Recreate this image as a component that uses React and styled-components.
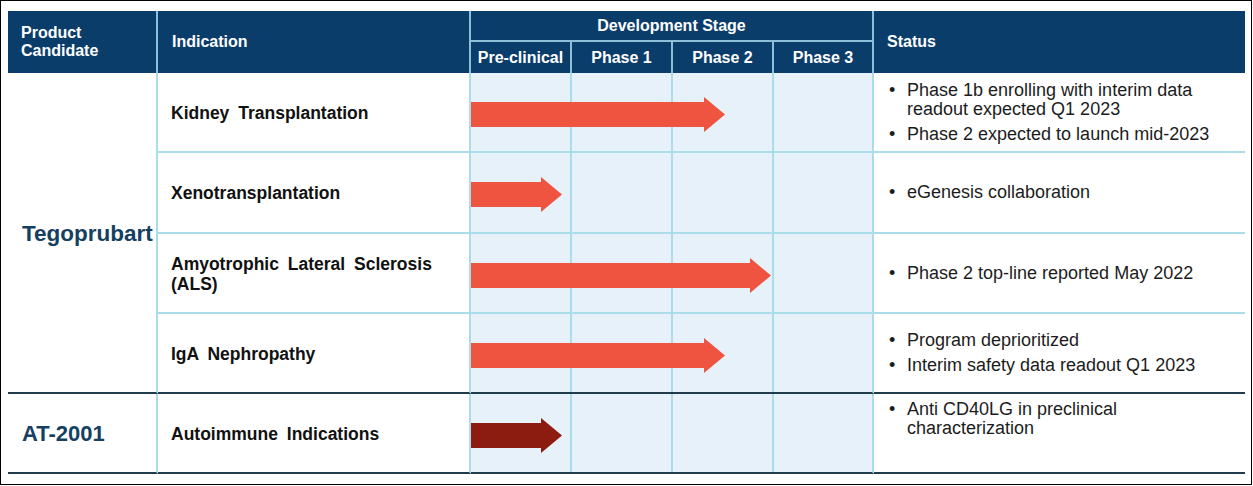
import styled, { createGlobalStyle } from "styled-components";

const GlobalStyle = createGlobalStyle`
  html, body {
    margin: 0;
    padding: 0;
    background: #ffffff;
  }
  body {
    font-family: "Liberation Sans", Arial, sans-serif;
  }
`;

const NAVY = "#0b3d6b";
const LIGHT = "#abdcea";
const HEADLINE = "#8dbfd8";
const DARK = "#1f3b4c";
const STAGE_BG = "#e7f1fa";

const Frame = styled.div`
  width: 1252px;
  height: 485px;
  box-sizing: border-box;
  border: 1px solid #000;
  padding: 10px 0 0 7px;
  background: #fff;
`;

const Table = styled.div`
  display: grid;
  grid-template-columns: 150px 313px 101px 101px 101px 100px 371px;
  grid-template-rows: 31px 31px 80px 81px 80px 80px 80px;
`;

const HeadCell = styled.div`
  box-sizing: border-box;
  background: ${NAVY};
  color: #fff;
  font-weight: bold;
  font-size: 16px;
  line-height: 18px;
  display: flex;
  align-items: center;
  justify-content: ${(p) => (p.$center ? "center" : "flex-start")};
  padding-left: ${(p) => (p.$center ? "0" : p.$pad || "13px")};
  grid-row: ${(p) => (p.$tall ? "span 2" : "auto")};
  grid-column: ${(p) => (p.$wide ? "span 4" : "auto")};
  border-right: ${(p) => (p.$last ? "none" : `2px solid ${HEADLINE}`)};
  border-bottom: ${(p) => (p.$wide ? `2px solid ${HEADLINE}` : "none")};
`;

const ProductCell = styled.div`
  box-sizing: border-box;
  grid-row: span ${(p) => p.$span || 1};
  display: flex;
  align-items: center;
  padding-left: 14px;
  padding-top: 2px;
  font-size: ${(p) => p.$size || "22px"};
  font-weight: bold;
  color: #16405f;
  border-right: 2px solid ${LIGHT};
  border-bottom: 2px solid ${DARK};
`;

const IndicationCell = styled.div`
  box-sizing: border-box;
  display: flex;
  align-items: center;
  padding-left: 13px;
  padding-top: 1px;
  font-size: 17.5px;
  line-height: 20px;
  font-weight: bold;
  color: #111;
  word-spacing: 4px;
  border-right: 2px solid ${LIGHT};
  border-bottom: 2px solid ${(p) => (p.$dark ? DARK : LIGHT)};
`;

const StageCell = styled.div`
  box-sizing: border-box;
  grid-column: span 4;
  display: flex;
  align-items: center;
  padding-top: 4px;
  background-color: ${STAGE_BG};
  background-image: linear-gradient(
    to right,
    transparent 99px,
    ${LIGHT} 99px,
    ${LIGHT} 101px
  );
  background-size: 101px 100%;
  background-repeat: repeat-x;
  border-right: 2px solid ${LIGHT};
  border-bottom: 2px solid ${(p) => (p.$dark ? DARK : LIGHT)};
`;

const StatusCell = styled.div`
  box-sizing: border-box;
  display: flex;
  flex-direction: column;
  justify-content: ${(p) => (p.$top ? "flex-start" : "center")};
  padding: ${(p) => (p.$top ? "6px 0 0 13px" : "0 0 0 13px")};
  border-bottom: 2px solid ${(p) => (p.$dark ? DARK : LIGHT)};
`;

const BulletList = styled.ul`
  list-style: none;
  margin: 0;
  padding: 0;
  display: flex;
  flex-direction: column;
  gap: 6px;
`;

const Item = styled.li`
  display: flex;
  font-size: 18px;
  line-height: 19px;
  color: #1c1c1c;
`;

const Dot = styled.span`
  flex: 0 0 20px;
  padding-left: 2px;
  box-sizing: border-box;
`;

const Arrow = ({ length, color }) => (
  <svg width={length} height={35} viewBox={`0 0 ${length} 35`}>
    <polygon
      points={`0,5 ${length - 21},5 ${length - 21},0 ${length},17.5 ${length - 21},35 ${length - 21},30 0,30`}
      fill={color}
    />
  </svg>
);

const rows = [
  {
    name: "Kidney Transplantation",
    arrow: 254,
    status: [
      "Phase 1b enrolling with interim data readout expected Q1 2023",
      "Phase 2 expected to launch mid-2023",
    ],
  },
  {
    name: "Xenotransplantation",
    arrow: 91,
    status: ["eGenesis collaboration"],
  },
  {
    name: (
      <>
        Amyotrophic Lateral Sclerosis
        <br />
        (ALS)
      </>
    ),
    arrow: 300,
    status: ["Phase 2 top-line reported May 2022"],
  },
  {
    name: "IgA Nephropathy",
    arrow: 254,
    status: ["Program deprioritized", "Interim safety data readout Q1 2023"],
    dark: true,
  },
];

const Status = ({ items, dark, top }) => (
  <StatusCell $dark={dark} $top={top}>
    <BulletList>
      {items.map((s, i) => (
        <Item key={i}>
          <Dot>•</Dot>
          <span>{s}</span>
        </Item>
      ))}
    </BulletList>
  </StatusCell>
);

export default function App() {
  return (
    <Frame>
      <GlobalStyle />
      <Table>
        <HeadCell $tall>
          Product
          <br />
          Candidate
        </HeadCell>
        <HeadCell $tall $pad="14px">
          Indication
        </HeadCell>
        <HeadCell $wide $center>
          Development Stage
        </HeadCell>
        <HeadCell $tall $last>
          Status
        </HeadCell>
        <HeadCell $center>Pre-clinical</HeadCell>
        <HeadCell $center>Phase 1</HeadCell>
        <HeadCell $center>Phase 2</HeadCell>
        <HeadCell $center>Phase 3</HeadCell>

        <ProductCell $span={4} $size="22.5px">
          Tegoprubart
        </ProductCell>
        {rows.map((r, i) => [
          <IndicationCell key={`i${i}`} $dark={r.dark}>
            <span>{r.name}</span>
          </IndicationCell>,
          <StageCell key={`s${i}`} $dark={r.dark}>
            <Arrow length={r.arrow} color="#ee5440" />
          </StageCell>,
          <Status key={`t${i}`} items={r.status} dark={r.dark} />,
        ])}

        <ProductCell>AT-2001</ProductCell>
        <IndicationCell $dark>
          <span>Autoimmune Indications</span>
        </IndicationCell>
        <StageCell $dark>
          <Arrow length={91} color="#8c1b10" />
        </StageCell>
        <Status
          items={["Anti CD40LG in preclinical characterization"]}
          dark
          top
        />
      </Table>
    </Frame>
  );
}
